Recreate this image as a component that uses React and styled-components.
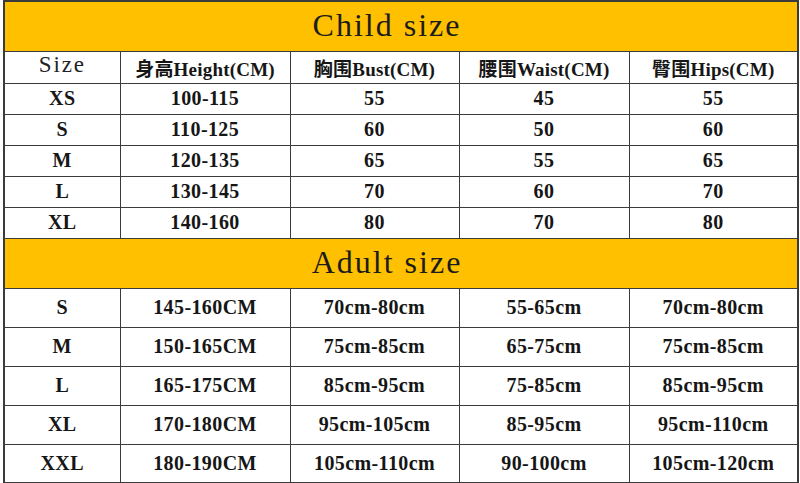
import React from "react";
import styled, { createGlobalStyle } from "styled-components";

const GlobalStyle = createGlobalStyle`
  html, body {
    margin: 0;
    padding: 0;
    background: #ffffff;
  }
`;

const childRows = [
  ["XS", "100-115", "55", "45", "55"],
  ["S", "110-125", "60", "50", "60"],
  ["M", "120-135", "65", "55", "65"],
  ["L", "130-145", "70", "60", "70"],
  ["XL", "140-160", "80", "70", "80"],
];

const adultRows = [
  ["S", "145-160CM", "70cm-80cm", "55-65cm", "70cm-80cm"],
  ["M", "150-165CM", "75cm-85cm", "65-75cm", "75cm-85cm"],
  ["L", "165-175CM", "85cm-95cm", "75-85cm", "85cm-95cm"],
  ["XL", "170-180CM", "95cm-105cm", "85-95cm", "95cm-110cm"],
  ["XXL", "180-190CM", "105cm-110cm", "90-100cm", "105cm-120cm"],
];

const headers = ["身高Height(CM)", "胸围Bust(CM)", "腰围Waist(CM)", "臀围Hips(CM)"];

const App = () => {
  return (
    <>
      <GlobalStyle />
      <Page>
        <Sheet>
          <colgroup>
            <col style={{ width: 116 }} />
            <col style={{ width: 170 }} />
            <col style={{ width: 169 }} />
            <col style={{ width: 170 }} />
            <col style={{ width: 169 }} />
          </colgroup>
          <tbody>
            <TitleRow>
              <TitleCell colSpan={5}>Child size</TitleCell>
            </TitleRow>
            <HeadRow>
              <SizeCell>Size</SizeCell>
              {headers.map((h) => (
                <HeadCell key={h}>{h}</HeadCell>
              ))}
            </HeadRow>
            {childRows.map((row) => (
              <DataRow key={"c" + row[0]}>
                {row.map((v, i) => (
                  <Cell key={i}>{v}</Cell>
                ))}
              </DataRow>
            ))}
            <TitleRow>
              <TitleCell colSpan={5}>Adult size</TitleCell>
            </TitleRow>
            {adultRows.map((row) => (
              <DataRow key={"a" + row[0]} $tall>
                {row.map((v, i) => (
                  <Cell key={i}>{v}</Cell>
                ))}
              </DataRow>
            ))}
          </tbody>
        </Sheet>
      </Page>
    </>
  );
};

const Page = styled.div`
  padding: 0 2px 0 3px;
  width: 795px;
`;

const Sheet = styled.table`
  width: 795px;
  table-layout: fixed;
  border-collapse: collapse;
  border: 2px solid #3b3b3b;
  font-family: "Liberation Serif", "Noto Sans CJK SC", serif;
  color: #161616;
`;

const Cell = styled.td`
  border: 1.5px solid #3b3b3b;
  padding: 0;
  text-align: center;
  vertical-align: middle;
  font-size: 20px;
  font-weight: bold;
  letter-spacing: 0.4px;
  white-space: nowrap;
`;

const HeadCell = styled(Cell)`
  font-size: 19px;
  letter-spacing: 0.2px;
`;

const SizeCell = styled(Cell)`
  font-size: 23px;
  font-weight: normal;
  letter-spacing: 1.8px;
  color: #222;
  padding-bottom: 5px;
`;

const TitleRow = styled.tr`
  height: 50px;
  background: #ffc000;
`;

const TitleCell = styled.td`
  border: 1.5px solid #3b3b3b;
  padding: 0 28px 2px 0;
  text-align: center;
  vertical-align: middle;
  font-size: 32px;
  font-weight: normal;
  letter-spacing: 2px;
  color: #1c1c1c;
`;

const HeadRow = styled.tr`
  height: 31px;
`;

const DataRow = styled.tr`
  height: ${(p) => (p.$tall ? "39px" : "31px")};
`;

export default App;
